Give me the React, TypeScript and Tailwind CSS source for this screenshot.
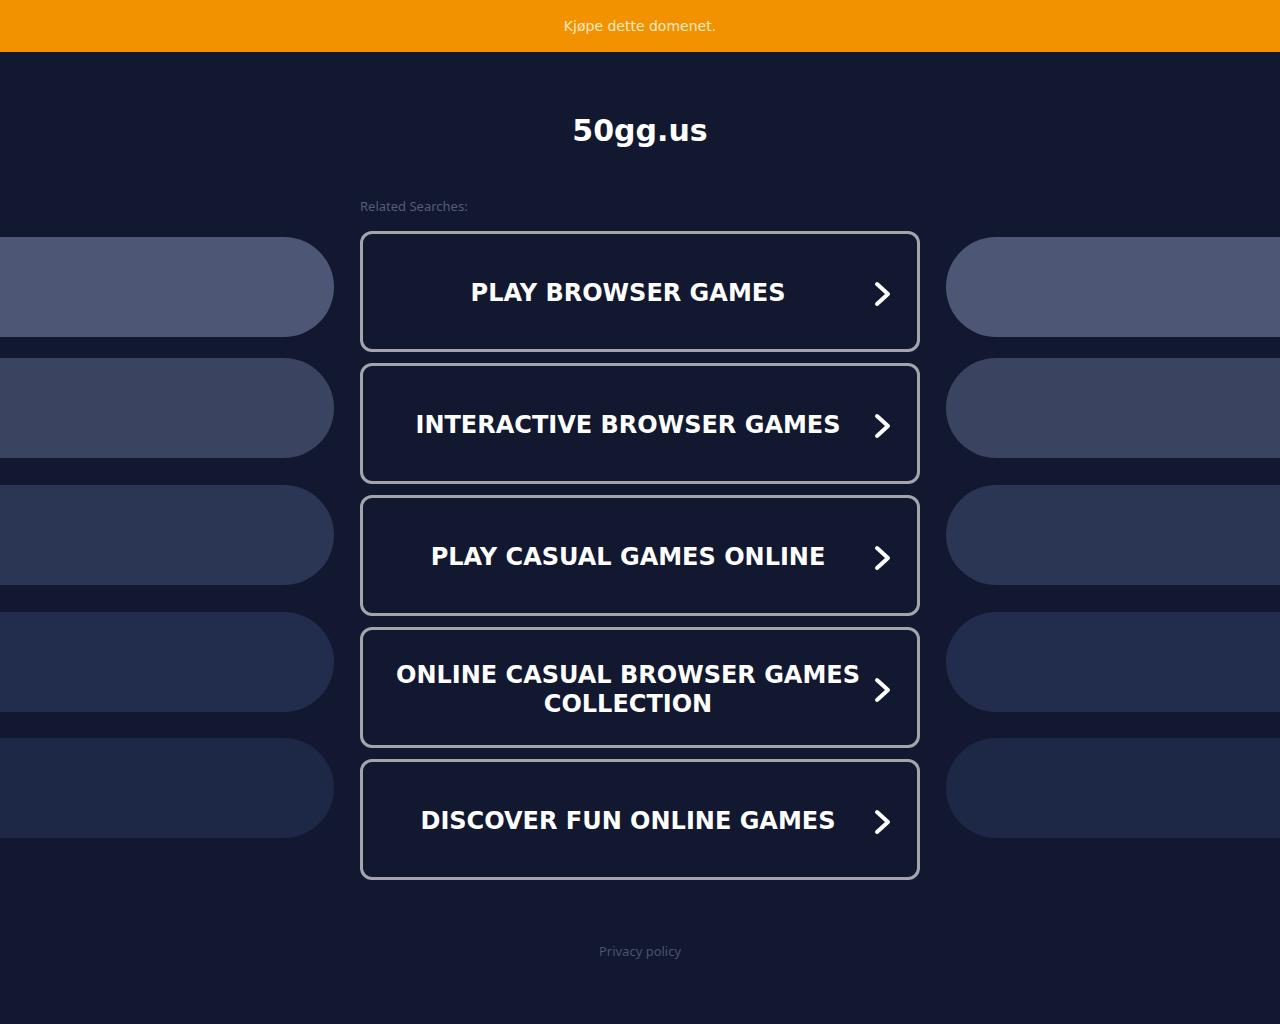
import React from "react";

const items = [
  "PLAY BROWSER GAMES",
  "INTERACTIVE BROWSER GAMES",
  "PLAY CASUAL GAMES ONLINE",
  "ONLINE CASUAL BROWSER GAMES COLLECTION",
  "DISCOVER FUN ONLINE GAMES",
];

function Chevron() {
  return (
    <svg width="24" height="28" viewBox="0 0 24 28" className="shrink-0">
      <path d="M6 4 L17 14 L6 24" fill="none" stroke="#ffffff" strokeWidth="4" strokeLinecap="round" strokeLinejoin="round" />
    </svg>
  );
}

export default function App() {
  const font = { fontFamily: '"DejaVu Sans", "Liberation Sans", sans-serif' };
  return (
    <div className="min-h-[1024px] w-full bg-[#121830] relative overflow-hidden" style={font}>
      <div className="h-[52px] bg-[#f39200] flex items-center justify-center text-[14px] text-[#fde8c4]">
        Kjøpe dette domenet.
      </div>

      {/* decorative pills */}
      <div className="absolute left-0 top-[237px] w-[334px] flex flex-col">
        <div className="h-[100px] rounded-r-full bg-[#4d5775]" />
        <div className="h-[100px] mt-[21px] rounded-r-full bg-[#3a4461]" />
        <div className="h-[100px] mt-[27px] rounded-r-full bg-[#2b3554]" />
        <div className="h-[100px] mt-[27px] rounded-r-full bg-[#222c4c]" />
        <div className="h-[100px] mt-[26px] rounded-r-full bg-[#1d2746]" />
      </div>
      <div className="absolute right-0 top-[237px] w-[334px] flex flex-col">
        <div className="h-[100px] rounded-l-full bg-[#4d5775]" />
        <div className="h-[100px] mt-[21px] rounded-l-full bg-[#3a4461]" />
        <div className="h-[100px] mt-[27px] rounded-l-full bg-[#2b3554]" />
        <div className="h-[100px] mt-[27px] rounded-l-full bg-[#222c4c]" />
        <div className="h-[100px] mt-[26px] rounded-l-full bg-[#1d2746]" />
      </div>

      <div className="relative flex flex-col items-center">
        <h1 className="mt-[59px] text-[30px] leading-[40px] font-bold text-white">50gg.us</h1>
        <div className="w-[560px] mt-[46px]">
          <div className="text-[13px] leading-[18px] text-[#555c78]" style={{ fontFamily: '"Noto Sans", "Open Sans", sans-serif' }}>
            Related Searches:
          </div>
          <div className="mt-[16px] flex flex-col gap-[11px]">
            {items.map((t) => (
              <div
                key={t}
                className="h-[121px] border-[3px] border-[#a3a5aa] rounded-[12px] flex items-center pt-[4px] pl-[30px] pr-[22px] bg-[#121830]"
              >
                <div className="flex-1 text-center text-white font-bold text-[24px] leading-[29px]">
                  {t}
                </div>
                <div className="ml-[8px]">
                  <Chevron />
                </div>
              </div>
            ))}
          </div>
        </div>
        <div className="mt-[62px] text-[13px] leading-[18px] text-[#4b5270]" style={{ fontFamily: '"Noto Sans", "Open Sans", sans-serif' }}>
          Privacy policy
        </div>
      </div>
    </div>
  );
}
